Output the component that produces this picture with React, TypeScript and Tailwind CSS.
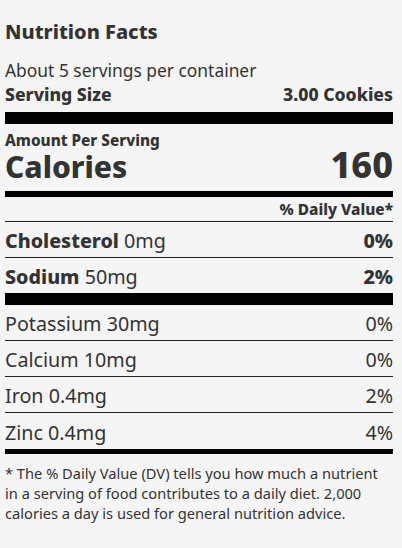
import React from "react";

const rows = [
  { name: "Potassium", amt: "30mg", dv: "0%" },
  { name: "Calcium", amt: "10mg", dv: "0%" },
  { name: "Iron", amt: "0.4mg", dv: "2%" },
];

export default function App() {
  return (
    <div className="min-h-[548px] bg-[#f5f5f5] text-[#333] font-['Noto_Sans',sans-serif]">
      <div className="ml-[5px] w-[388px] pt-[18px]">
        <div className="h-[28px] text-[20px] leading-[28px] font-extrabold">Nutrition Facts</div>
        <div className="mt-[12px] h-[24px] text-[17.4px] leading-[24px]">About 5 servings per container</div>
        <div className="flex h-[24px] items-center justify-between text-[17.6px] leading-[24px] font-extrabold">
          <span>Serving Size</span>
          <span>3.00 Cookies</span>
        </div>
        <div className="mt-[6px] h-[12px] bg-black" />
        <div className="mt-[8px] h-[16px] text-[15.3px] leading-[16px] font-extrabold">Amount Per Serving</div>
        <div className="flex h-[34px] items-baseline justify-between leading-[34px] font-extrabold">
          <span className="text-[30px]">Calories</span>
          <span className="text-[36px]">160</span>
        </div>
        <div className="mt-[9px] h-[6px] bg-black" />
        <div className="flex h-[25px] items-center justify-end border-b border-[#222] pt-[2px] text-[15.4px] leading-[20px] font-extrabold">
          % Daily Value*
        </div>
        <div className="flex h-[36px] items-center justify-between border-b border-[#222] pt-[3px] text-[19.7px]">
          <span>
            <span className="font-extrabold">Cholesterol</span> 0mg
          </span>
          <span className="font-extrabold">0%</span>
        </div>
        <div className="flex h-[35px] items-center justify-between pt-[3px] text-[19.7px]">
          <span>
            <span className="font-extrabold">Sodium</span> 50mg
          </span>
          <span className="font-extrabold">2%</span>
        </div>
        <div className="h-[12px] bg-black" />
        {rows.map((r) => (
          <div
            key={r.name}
            className="flex h-[36px] items-center justify-between border-b border-[#222] pt-[3px] text-[19.7px]"
          >
            <span>
              {r.name} {r.amt}
            </span>
            <span>{r.dv}</span>
          </div>
        ))}
        <div className="flex h-[36px] items-center justify-between pt-[3px] text-[19.7px]">
          <span>Zinc 0.4mg</span>
          <span>4%</span>
        </div>
        <div className="h-[5px] bg-black" />
        <p className="pt-[9px] text-[14.65px] leading-[20px]">
          * The % Daily Value (DV) tells you how much a nutrient in a serving of food contributes to a daily diet. 2,000
          calories a day is used for general nutrition advice.
        </p>
      </div>
    </div>
  );
}
